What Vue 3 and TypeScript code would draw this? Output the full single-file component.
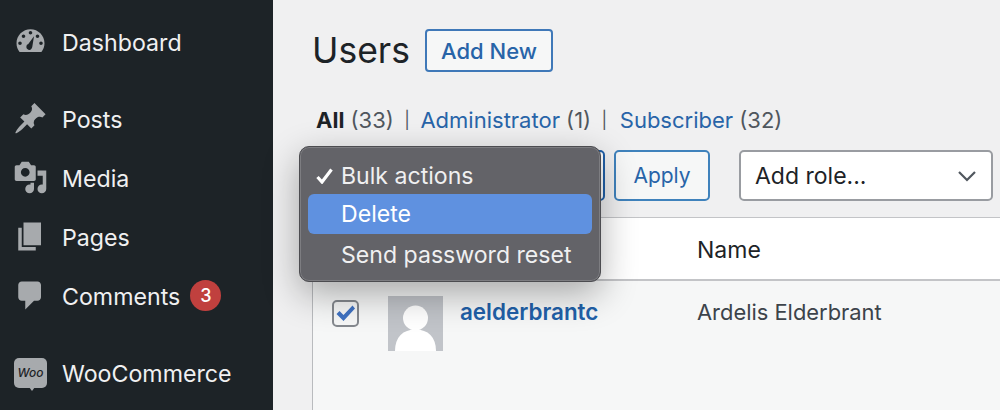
<template>
  <div class="page">
    <aside class="sidebar">
      <a
        v-for="item in navItems"
        :key="item.label"
        class="nav-item"
        :class="{ 'nav-gap': item.gap }"
      >
        <span v-if="item.woo" class="woo-icon"><span class="woo-text">Woo</span></span>
        <svg v-else class="nav-icon" viewBox="0 0 20 20" aria-hidden="true">
          <path :d="item.path" fill-rule="evenodd" />
        </svg>
        <span class="nav-label">{{ item.label }}</span>
        <span v-if="item.badge" class="badge">{{ item.badge }}</span>
      </a>
    </aside>

    <main class="content">
      <div class="title-row">
        <h1>Users</h1>
        <button class="add-new">Add New</button>
      </div>

      <ul class="tabs">
        <li><b>All</b> <span class="count">(33)</span></li>
        <li class="sep">|</li>
        <li><a>Administrator</a> <span class="count">(1)</span></li>
        <li class="sep">|</li>
        <li class="last-tab"><a>Subscriber</a> <span class="count">(32)</span></li>
      </ul>

      <div class="toolbar">
        <div class="bulk-select"></div>
        <button class="apply">Apply</button>
        <div class="role-select">
          <span>Add role...</span>
          <svg class="chevron" width="20" height="12" viewBox="0 0 20 12" aria-hidden="true">
            <path d="M2 2l8 8 8-8" fill="none" stroke="#50575e" stroke-width="2.2" />
          </svg>
        </div>
      </div>

      <div class="table">
        <div class="thead">
          <span class="col-name">Name</span>
        </div>
        <div class="row">
          <span class="checkbox">
            <svg width="21" height="19" viewBox="0 0 21 19" aria-hidden="true">
              <path d="M1.5 10l3-3 4 4L17.500 1.500l2.500 3L8.500 17z" fill="#3f72c2" />
            </svg>
          </span>
          <span class="avatar">
            <svg width="55" height="55" viewBox="0 0 55 55" aria-hidden="true">
              <circle cx="27.500" cy="22" r="12.500" fill="#fff" />
              <path d="M7 55c0-14 8-21.500 20.500-21.500S48 41 48 55z" fill="#fff" />
            </svg>
          </span>
          <a class="username">aelderbrantc</a>
          <span class="fullname">Ardelis Elderbrant</span>
        </div>
      </div>

      <div class="menu">
        <div v-for="option in bulkOptions" :key="option.label" class="menu-item" :class="{ active: option.active }">
          <svg v-if="option.checked" class="check" width="17" height="16" viewBox="0 0 17 16" aria-hidden="true">
            <path d="M1.500 9l4.500 5L15.500 1.500" fill="none" stroke="#fff" stroke-width="3.200" />
          </svg>
          {{ option.label }}
        </div>
      </div>
    </main>
  </div>
</template>

<script setup lang="ts">
interface NavItem {
  label: string;
  path?: string;
  gap?: boolean;
  badge?: number;
  woo?: boolean;
}

interface BulkOption {
  label: string;
  checked?: boolean;
  active?: boolean;
}

const navItems: NavItem[] = [
  {
    label: 'Dashboard',
    path: 'M3.76 16h12.48c1.100-1.370 1.760-3.110 1.760-5 0-4.420-3.580-8-8-8s-8 3.580-8 8c0 1.890.660 3.630 1.760 5zM10 4c.550 0 1 .450 1 1s-.450 1-1 1-1-.450-1-1 .450-1 1-1zM6 6c.550 0 1 .450 1 1s-.450 1-1 1-1-.450-1-1 .450-1 1-1zm8 0c.550 0 1 .450 1 1s-.450 1-1 1-1-.450-1-1 .450-1 1-1zm-5.370 5.550L12 7l-1 6.200c-.200 1-.900 1.800-1.900 1.600-1.100-.200-1.700-1.200-1.400-2.200.100-.600.400-1.100.930-1.050zM4 10c.550 0 1 .450 1 1s-.450 1-1 1-1-.450-1-1 .450-1 1-1zm12 0c.550 0 1 .450 1 1s-.450 1-1 1-1-.450-1-1 .450-1 1-1z'
  },
  {
    label: 'Posts',
    gap: true,
    path: 'M10.440 3.020l1.820-1.820 6.360 6.350-1.830 1.820c-1.050-.680-2.480-.570-3.410.360l-.750.750c-.920.930-1.040 2.350-.350 3.410l-1.830 1.820-2.410-2.410-2.800 2.790c-.420.420-3.380 2.710-3.800 2.290s1.860-3.390 2.280-3.810l2.790-2.790L4.100 9.360l1.830-1.820c1.050.690 2.480.570 3.410-.360l.750-.750c.930-.920 1.050-2.350.350-3.410z'
  },
  {
    label: 'Media',
    path: 'M13 11V4c0-.550-.450-1-1-1h-1.670L9 1H5L3.670 3H2c-.550 0-1 .450-1 1v7c0 .550.450 1 1 1h10c.550 0 1-.450 1-1zM7 4.500c1.380 0 2.500 1.120 2.500 2.500S8.380 9.500 7 9.500 4.500 8.380 4.500 7 5.620 4.500 7 4.500zM14 6h5v10.500c0 1.380-1.120 2.500-2.500 2.500S14 17.880 14 16.500s1.120-2.500 2.500-2.500c.170 0 .340.020.500.050V9h-3V6zm-4 8.050V13h2v3.500c0 1.380-1.120 2.500-2.500 2.500S7 17.880 7 16.500 8.120 14 9.500 14c.170 0 .340.020.500.050z'
  },
  {
    label: 'Pages',
    path: 'M6 15V2h10v13H6zm-1 1h8v2H3V5h2v11z'
  },
  {
    label: 'Comments',
    badge: 3,
    path: 'M5 2h9c1.100 0 2 .900 2 2v7c0 1.100-.900 2-2 2h-2l-5 5v-5H5c-1.100 0-2-.900-2-2V4c0-1.100.900-2 2-2z'
  },
  { label: 'WooCommerce', gap: true, woo: true }
];

const bulkOptions: BulkOption[] = [
  { label: 'Bulk actions', checked: true },
  { label: 'Delete', active: true },
  { label: 'Send password reset' }
];
</script>

<style scoped>
.page {
  display: flex;
  width: 1000px;
  height: 410px;
  overflow: hidden;
  background: #f0f0f1;
  font-family: Inter, "Liberation Sans", sans-serif;
  color: #1d2327;
}

/* Sidebar */
.sidebar {
  flex: 0 0 273px;
  padding-top: 12px;
  background: #1d2327;
  box-sizing: border-box;
}

.nav-item {
  display: flex;
  align-items: center;
  height: 59px;
  padding-left: 13px;
  color: #f0f0f1;
  font-size: 23.2px;
}

.nav-gap {
  margin-top: 18px;
}

.nav-icon {
  flex: 0 0 35px;
  width: 35px;
  height: 35px;
  margin-right: 14px;
  fill: #a7aaad;
}

.nav-label {
  padding-top: 2px;
}

.woo-icon {
  position: relative;
  display: flex;
  flex: 0 0 33px;
  align-items: center;
  justify-content: center;
  width: 33px;
  height: 30px;
  margin: 0 15px 0 1px;
  background: #a7aaad;
  border-radius: 5px;
}

.woo-icon::after {
  content: '';
  position: absolute;
  left: 15px;
  bottom: -3px;
  border-top: 4px solid #a7aaad;
  border-left: 3px solid transparent;
  border-right: 3px solid transparent;
}

.woo-text {
  color: #1d2327;
  font-size: 12px;
  font-style: italic;
  font-weight: 500;
}

.badge {
  display: flex;
  align-items: center;
  justify-content: center;
  width: 31px;
  height: 31px;
  margin-left: 10px;
  background: #c0403e;
  border-radius: 50%;
  color: #fff;
  font-size: 18px;
  font-weight: 500;
}

/* Main column */
.content {
  position: relative;
  flex: 1;
  min-width: 0;
  padding: 29px 0 0 39px;
}

.title-row {
  display: flex;
  align-items: center;
  height: 43px;
}

h1 {
  margin: 0 15px 0 0;
  font-size: 35.5px;
  font-weight: 400;
  line-height: 43px;
}

.add-new {
  width: 128px;
  height: 43px;
  padding: 0;
  background: #f6f7f7;
  border: 2px solid #3f78b8;
  border-radius: 4px;
  color: #2864a8;
  font-family: inherit;
  font-size: 22px;
  font-weight: 500;
}

.tabs {
  display: flex;
  gap: 10.5px;
  height: 30px;
  margin: 33px 0 15px;
  padding: 0 0 0 4px;
  list-style: none;
  font-size: 22px;
  line-height: 30px;
}

.tabs a {
  color: #2864a8;
}

.last-tab {
  margin-left: 2px;
}

.count {
  color: #50575e;
}

.sep {
  color: #50575e;
  font-size: 17px;
}

.toolbar {
  display: flex;
  align-items: stretch;
  height: 51px;
}

.bulk-select {
  width: 293px;
  background: #fff;
  border: 2px solid #2160a8;
  border-radius: 5px;
  box-sizing: border-box;
}

.apply {
  width: 96px;
  margin-left: 9px;
  padding: 0;
  background: #f6f7f7;
  border: 2px solid #3f82bc;
  border-radius: 5px;
  color: #2864a8;
  font-family: inherit;
  font-size: 21px;
}

.role-select {
  display: flex;
  align-items: center;
  justify-content: space-between;
  width: 254px;
  margin-left: 29px;
  padding: 0 14px 0 14px;
  background: #fff;
  border: 2px solid #999ca1;
  border-radius: 5px;
  box-sizing: border-box;
  font-size: 23px;
}

.table {
  margin-top: 16px;
  border-left: 1px solid #b9bbbe;
}

.thead {
  display: flex;
  align-items: center;
  height: 59px;
  padding: 2px 0 0 384px;
  box-sizing: content-box;
  background: #fff;
  border-top: 1px solid #c3c4c7;
  border-bottom: 2px solid #c3c4c7;
  font-size: 23px;
}

.row {
  position: relative;
  display: flex;
  align-items: flex-start;
  height: 130px;
  padding: 15px 0 0 19px;
  background: #f6f7f7;
}

.checkbox {
  display: flex;
  align-items: center;
  justify-content: center;
  box-sizing: border-box;
  width: 27px;
  height: 27px;
  margin-top: 4px;
  background: #f6f7f7;
  border: 2px solid #85898f;
  border-radius: 5px;
}

.avatar {
  display: block;
  width: 55px;
  height: 55px;
  margin-left: 29px;
  background: #c1c4c9;
}

.username {
  width: 237px;
  margin-left: 17px;
  color: #2160a8;
  font-size: 22.4px;
  font-weight: 600;
  line-height: 32px;
}

.fullname {
  color: #3c434a;
  font-size: 21.9px;
  line-height: 32px;
}

/* Native select popup, open over the toolbar */
.menu {
  position: absolute;
  top: 146px;
  left: 26px;
  width: 302px;
  height: 136px;
  box-sizing: border-box;
  padding: 8px;
  background: #636368;
  border: 1px solid #4c4c50;
  border-radius: 10px;
  box-shadow: inset 0 0 0 1px #7d7d81, 0 12px 36px rgba(0, 0, 0, 0.32);
  color: #f0f0f1;
  font-size: 23.1px;
}

.menu-item {
  position: relative;
  height: 39px;
  padding-left: 33px;
  border-radius: 6px;
  line-height: 42px;
}

.menu-item.active {
  height: 40px;
  background: #5f91e0;
  color: #fff;
  line-height: 40px;
}

.check {
  position: absolute;
  top: 13px;
  left: 7.5px;
}
</style>

<style>
html,
body {
  margin: 0;
  overflow: hidden;
}
</style>
